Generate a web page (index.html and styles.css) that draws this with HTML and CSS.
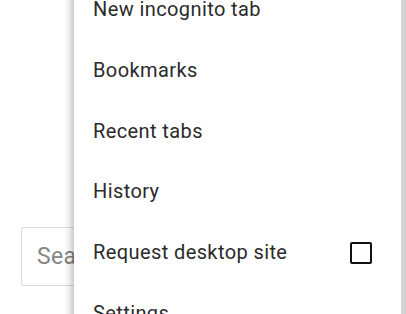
FILE: index.html
```html
<!DOCTYPE html>
<html lang="en">
<head>
    <meta charset="UTF-8">
    <meta name="viewport" content="width=device-width, initial-scale=1.0">
    <title>Menu</title>
    <link rel="stylesheet" href="styles.css">
</head>
<body>
    <div class="page">
        <div class="search-box">Search</div>
    </div>

    <div class="menu">
        <div class="menu-item">New incognito tab</div>
        <div class="menu-item">Bookmarks</div>
        <div class="menu-item">Recent tabs</div>
        <div class="menu-item">History</div>
        <div class="menu-item">
            <span>Request desktop site</span>
            <span class="checkbox"></span>
        </div>
        <div class="menu-item">Settings</div>
    </div>
</body>
</html>
```

FILE: styles.css
```css
body {
    font-family: Roboto, "Noto Sans", sans-serif;
    margin: 0;
    padding: 0;
    background-color: white;
    overflow: hidden;
    height: 314px;
}
.page {
    padding: 227px 0 0 21px;
}
.search-box {
    height: 57px;
    width: 300px;
    border: 1px solid #dcdcdc;
    border-radius: 2px;
    padding-left: 15px;
    line-height: 57px;
    font-size: 23px;
    letter-spacing: 0.3px;
    color: #858585;
}
.menu {
    position: absolute;
    top: -21px;
    left: 74px;
    right: 0;
    background-color: white;
    border-right: 5px solid #d4d4d4;
    box-shadow: -3px 0 7px rgba(0,0,0,0.25);
}
.menu-item {
    display: flex;
    justify-content: space-between;
    align-items: center;
    height: 60.8px;
    line-height: 60.8px;
    padding: 0 29px 0 19px;
    font-size: 20px;
    letter-spacing: 0.4px;
    color: #2b2b2b;
}
.checkbox {
    width: 18px;
    height: 18px;
    border: 2.5px solid #111;
    border-radius: 2px;
}
```
